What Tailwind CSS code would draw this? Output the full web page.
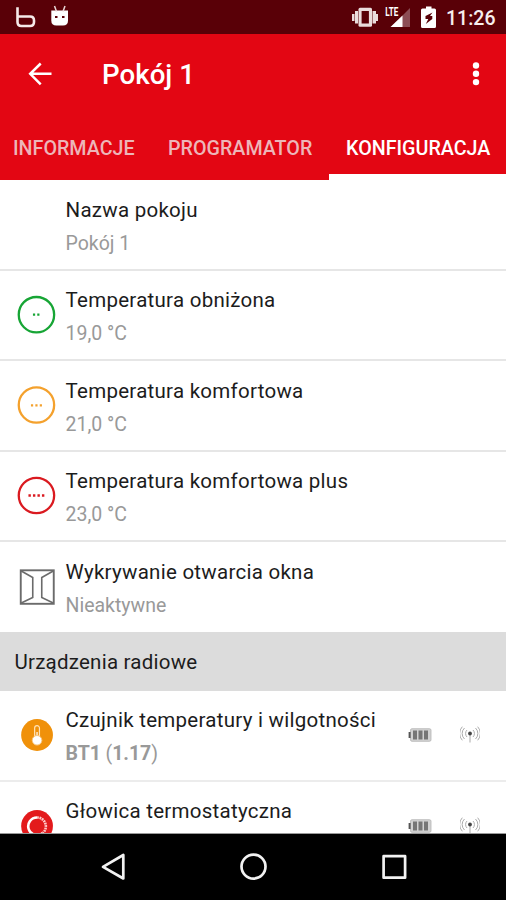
<!DOCTYPE html>
<html lang="pl">
<head>
<meta charset="utf-8">
<title>Pokój 1</title>
<script src="https://cdn.jsdelivr.net/npm/@tailwindcss/browser@4"></script>
</head>
<body class="w-[506px] h-[900px] overflow-hidden bg-white font-[Roboto,sans-serif] text-[20.5px] text-[#1c1c1c]">
<svg class="hidden">
  <symbol id="battery" viewBox="0 0 24 14">
    <rect x="2.5" y=".7" width="20.5" height="12.6" rx="1.5" fill="#d2d2d2" stroke="#b4b4b4" stroke-width=".8"/>
    <path d="M.6 4h2v6h-2z" fill="#555"/>
    <path d="M5 2.5h4v9H5zM10.500 2.500h4v9h-4zM16 2.500h4v9h-4z" fill="#767676"/>
  </symbol>
  <symbol id="radio" viewBox="0 0 20 20">
    <path d="M10 9v8.500" stroke="#aaa" stroke-width="1"/>
    <circle cx="10" cy="8.500" r="1.900" fill="#444"/>
    <path d="M7 5a5 5 0 0 0 0 7M13 5a5 5 0 0 1 0 7M4.500 3a7.600 7.600 0 0 0 0 11M15.500 3a7.600 7.600 0 0 1 0 11M2.300 1.700a10 10 0 0 0 0 13.600M17.700 1.700a10 10 0 0 1 0 13.600" fill="none" stroke="#a3a3a3" stroke-width=".9"/>
  </symbol>
</svg>
<div class="flex flex-col h-[900px]">
  <div class="h-[34px] shrink-0 bg-[#590007] flex items-center">
    <svg class="w-[80px] h-[34px]" viewBox="0 0 80 34" fill="none">
      <path d="M17.500 7.300v14.700q0 4 4 4h8.500q4 0 4-4v-1.500q0-4-4-4H17.500" stroke="#f6e9e9" stroke-width="2.600"/>
      <path d="M51.300 10.500h16.700v10q0 5-5 5h-6.700q-5 0-5-5z" fill="#fff"/>
      <path d="M54.500 6l2 5.500M65 6l-2 5.500" stroke="#e8d5d5" stroke-width="1.500"/>
      <path d="M55 17h2.500M62 17h2.500" stroke="#590007" stroke-width="1.900"/>
    </svg>
    <svg class="ml-auto w-[95px] h-[34px]" viewBox="350 0 95 34">
      <g fill="#eadcdc"><rect x="358.500" y="7.800" width="13.500" height="19" rx="1.500"/><path d="M355 11h3v12.500h-3zM372.500 11h3.500v12.500h-3.500zM352 14h2.500v7H352zM376 14h2v7h-2z"/></g>
      <path d="M361.600 11h7.300v12.500h-7.300z" fill="#590007"/>
      <text x="385.300" y="16.300" font-size="12.800" font-weight="700" fill="#fff" textLength="13" lengthAdjust="spacingAndGlyphs">LTE</text>
      <path d="M410 8v19h-19l7.500-7.500z" fill="#8c4d55"/>
      <path d="M402.500 15.500V27h-12z" fill="#fff"/>
      <path d="M426 6.500h5.500v2h3q1.500 0 1.500 1.500v16.500q0 1.500-1.500 1.500h-12q-1.500 0-1.500-1.500V10q0-1.500 1.500-1.500h3.500z" fill="#fff"/>
      <path d="M432.500 12.500l-7 3.500v3h2.800l-2.500 5 6.500-5v-3h-2.300z" fill="#590007"/>
    </svg>
    <span class="w-[61px] pl-[1px] text-[19.5px] font-medium text-[#f7eeee] leading-[34px] pt-[3px]">11:26</span>
  </div>
  <header class="h-[146px] shrink-0 bg-[#e30613] text-white flex flex-col">
    <div class="h-[80px] flex items-center">
      <svg class="ml-[27px] w-[26px] h-[26px]" viewBox="0 0 26 26" fill="none" stroke="#fff" stroke-width="2.500"><path d="M24.500 12.800H3M13.700 2.500L3.200 12.800l10.500 10.500"/></svg>
      <h1 class="ml-[49px] pt-[2px] text-[27.7px] font-medium leading-[40px]">Pokój 1</h1>
      <svg class="ml-auto mr-[24px] w-[12px] h-[26px]" viewBox="0 0 12 26" fill="#fff"><circle cx="6" cy="4.500" r="3.200"/><circle cx="6" cy="12.800" r="3.200"/><circle cx="6" cy="21.100" r="3.200"/></svg>
    </div>
    <nav class="h-[66px] flex text-[19.700px] font-medium leading-[69px] text-[#edb6b9]">
      <div class="w-[151px] pl-[13px]">INFORMACJE</div>
      <div class="w-[178px] pl-[17px]">PROGRAMATOR</div>
      <div class="w-[177px] pl-[17px] text-white border-b-[6px] border-white">KONFIGURACJA</div>
    </nav>
  </header>
  <main class="flex-1 overflow-hidden tracking-[0.27px]">
    <section class="h-[91px] border-b-2 border-[#e6e6e6] flex">
      <div class="w-[65.500px]"></div>
      <div class="pt-[13px]"><p class="leading-[34px]">Nazwa pokoju</p><p class="leading-[33px] text-[#999] text-[19.500px] tracking-normal">Pokój 1</p></div>
    </section>
    <section class="h-[90px] border-b-2 border-[#e6e6e6] flex">
      <svg class="w-[65.500px] h-[88px]" viewBox="0 0 65 88" fill="none"><circle cx="36.200" cy="43.700" r="17.700" stroke="#17a535" stroke-width="2.300"/><path d="M32.700 43.700h2.200M37 43.700h2.200" stroke="#17a535" stroke-width="2.200"/></svg>
      <div class="pt-[12px]"><p class="leading-[34px]">Temperatura obniżona</p><p class="leading-[33px] text-[#999] text-[19.500px] tracking-normal">19,0 °C</p></div>
    </section>
    <section class="h-[91px] border-b-2 border-[#e6e6e6] flex">
      <svg class="w-[65.500px] h-[88px]" viewBox="0 0 65 88" fill="none"><circle cx="36.200" cy="44" r="17.700" stroke="#f4a12d" stroke-width="2.300"/><path d="M30.700 44.300h2.200M35.100 44.300h2.200M39.500 44.300h2.200" stroke="#f4a12d" stroke-width="2.200"/></svg>
      <div class="pt-[13px]"><p class="leading-[34px]">Temperatura komfortowa</p><p class="leading-[33px] text-[#999] text-[19.500px] tracking-normal">21,0 °C</p></div>
    </section>
    <section class="h-[90px] border-b-2 border-[#e6e6e6] flex">
      <svg class="w-[65.500px] h-[88px]" viewBox="0 0 65 88" fill="none"><circle cx="36.200" cy="43.500" r="17.700" stroke="#da1a20" stroke-width="2.300"/><path d="M28.200 43.500h2.400M32.700 43.500h2.400M37.200 43.500h2.400M41.700 43.500h2.400" stroke="#da1a20" stroke-width="2.300"/></svg>
      <div class="pt-[12px]"><p class="leading-[34px]">Temperatura komfortowa plus</p><p class="leading-[33px] text-[#999] text-[19.500px] tracking-normal">23,0 °C</p></div>
    </section>
    <section class="h-[90px] flex">
      <svg class="w-[65.500px] h-[90px]" viewBox="0 0 65 90" fill="none" stroke="#6b6b6b"><rect x="20.500" y="28.300" width="33" height="33.500" stroke-width="1.900"/><path d="M21 29l11.500 6.500v20L21 61M53 29l-11.500 6.500v20L53 61" stroke-width="1.600"/></svg>
      <div class="pt-[13px]"><p class="leading-[34px]">Wykrywanie otwarcia okna</p><p class="leading-[33px] text-[#999] text-[19.500px] tracking-normal">Nieaktywne</p></div>
    </section>
    <h2 class="h-[59px] bg-[#dcdcdc] pl-[14.500px] leading-[60px] tracking-[0.23px]">Urządzenia radiowe</h2>
    <section class="h-[91px] border-b-2 border-[#ececec] flex items-start">
      <svg class="w-[65.500px] h-[88px]" viewBox="0 0 65 88"><circle cx="36.800" cy="44" r="15.900" fill="#f0910a"/><path d="M34.400 46.500V37a2.400 2.400 0 0 1 4.800 0v9.500" fill="none" stroke="#ffe3b8" stroke-width="1.200"/><path d="M36.800 41v7" stroke="#fff" stroke-width="1.200"/><circle cx="36.800" cy="49.300" r="4.800" fill="#fff" stroke="#f8c67e" stroke-width="1"/></svg>
      <div class="pt-[12px]"><p class="leading-[34px]">Czujnik temperatury i wilgotności</p><p class="leading-[33px] text-[#999] text-[19.500px] tracking-[-0.050px]"><b>BT1</b> (<b>1.17</b>)</p></div>
      <svg class="ml-auto mt-[37px] mr-[28px] w-[24px] h-[14px]"><use href="#battery"/></svg>
      <svg class="mt-[34px] mr-[26px] w-[20px] h-[20px]"><use href="#radio"/></svg>
    </section>
    <section class="h-[90px] flex items-start">
      <svg class="w-[65.500px] h-[88px]" viewBox="0 0 65 88"><circle cx="36.800" cy="44" r="15.900" fill="#e31a1c"/><path d="M42.500 51a8.800 8.800 0 1 1-5.700-15.500" fill="none" stroke="#fff" stroke-width="2.600"/><path d="M36.800 35.500a8.800 8.800 0 0 1 8.800 8.800q0 4-3.100 6.700" fill="none" stroke="#ffc9c9" stroke-width="2.600" stroke-dasharray="1.800 .7"/></svg>
      <div class="pt-[12px]"><p class="leading-[34px]">Głowica termostatyczna</p></div>
      <svg class="ml-auto mt-[37px] mr-[28px] w-[24px] h-[14px]"><use href="#battery"/></svg>
      <svg class="mt-[34px] mr-[26px] w-[20px] h-[20px]"><use href="#radio"/></svg>
    </section>
  </main>
  <footer class="h-[67px] shrink-0 bg-black border-t border-[#999]">
    <svg class="w-[506px] h-[66px]" viewBox="0 834 506 66" fill="none" stroke="#f2f2f2" stroke-width="2.700" stroke-linejoin="round"><path d="M123.300 855v23.500L103 866.800z"/><circle cx="253.500" cy="866.600" r="12"/><rect x="383.600" y="856.200" width="21.500" height="21.500"/></svg>
  </footer>
</div>
</body>
</html>
